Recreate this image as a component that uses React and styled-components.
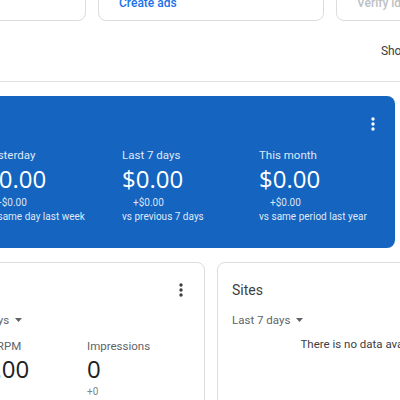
import React from 'react';
import styled, { createGlobalStyle } from 'styled-components';

const GlobalStyle = createGlobalStyle`
  body {
    margin: 0;
    background: #fff;
    font-family: Roboto, "Liberation Sans", Arial, sans-serif;
    overflow: hidden;
  }
`;

const Main = styled.div`
  margin: -59px 0 0 -166px;
  width: 679px;
  display: flex;
  flex-direction: column;
`;

const TopRow = styled.div`
  display: grid;
  grid-template-columns: 252px 226px 226px;
  gap: 12px;
`;

const TopCard = styled.div`
  box-sizing: border-box;
  height: 80px;
  border: 1px solid #dadce0;
  border-radius: 8px;
  padding: 15px 20px 9px;
  display: flex;
  flex-direction: column;
  justify-content: space-between;
`;

const TopTitle = styled.div`
  font-size: 13px;
  line-height: 20px;
  color: #3c4043;
`;

const TopLink = styled.div`
  font-size: 12px;
  line-height: 16px;
  font-weight: 500;
  color: ${(p) => (p.disabled ? '#bdc1c6' : '#1a73e8')};
`;

const Toolbar = styled.div`
  height: 61px;
  box-sizing: border-box;
  border-bottom: 1px solid #e0e0e0;
  display: flex;
  align-items: center;
  justify-content: flex-end;
  padding-right: 37px;
  font-size: 12px;
  color: #3c4043;
`;

const BlueCard = styled.div`
  box-sizing: border-box;
  margin-top: 14px;
  width: 561px;
  height: 152px;
  background: #1565c0;
  border-radius: 8px;
  padding: 8px 12px 0 14px;
  color: #fff;
`;

const CardHeader = styled.div`
  display: flex;
  align-items: center;
  justify-content: space-between;
  height: ${(p) => p.h || 40}px;
`;

const CardName = styled.span`
  font-size: 14px;
`;

const Kebab = styled.svg`
  width: 20px;
  height: 20px;
  fill: ${(p) => p.color || '#3c4043'};
  display: block;
`;

const StatGrid = styled.div`
  margin-top: ${(p) => p.mt || 0}px;
  display: grid;
  grid-template-columns: repeat(${(p) => p.cols}, ${(p) => p.w}px);
`;

const StatLabel = styled.div`
  font-size: 11.5px;
  line-height: 20px;
  color: ${(p) => (p.light ? 'rgba(255,255,255,0.88)' : '#5f6368')};
`;

const StatValue = styled.div`
  font-family: "Open Sans", Roboto, sans-serif;
  font-size: 24px;
  line-height: ${(p) => (p.light ? 28 : 26)}px;
  color: ${(p) => (p.light ? '#fff' : '#202124')};
`;

const StatDelta = styled.div`
  margin-top: ${(p) => p.mt || 0}px;
  font-size: 10px;
  line-height: ${(p) => (p.light ? 14 : 16)}px;
  padding-left: ${(p) => (p.indent ? 11 : 0)}px;
  color: ${(p) => (p.light ? 'rgba(255,255,255,0.85)' : '#80868b')};
`;

const Note = styled.div`
  font-size: 10px;
  line-height: 14px;
  color: rgba(255, 255, 255, 0.88);
`;

const LowerRow = styled.div`
  margin-top: 14px;
  display: grid;
  grid-template-columns: 371px 296px;
  gap: 12px;
`;

const Card = styled.div`
  box-sizing: border-box;
  height: 200px;
  border: 1px solid #dadce0;
  border-radius: 8px;
  padding: 15px 13px 0 14px;
`;

const CardTitle = styled.div`
  font-size: 14px;
  line-height: 24px;
  color: #3c4043;
`;

const Dropdown = styled.div`
  margin-top: 8px;
  display: flex;
  align-items: center;
  gap: 6px;
  font-size: 11.5px;
  line-height: 20px;
  color: #5f6368;
`;

const Caret = styled.svg`
  width: 7px;
  height: 4px;
  fill: #5f6368;
`;

const Empty = styled.div`
  margin-top: 4px;
  text-align: center;
  font-size: 11.5px;
  line-height: 20px;
  color: #3c4043;
`;

const MoreIcon = ({ color }) => (
  <Kebab viewBox="0 0 20 20" color={color}>
    <circle cx="10" cy="5" r="1.7" />
    <circle cx="10" cy="10" r="1.7" />
    <circle cx="10" cy="15" r="1.7" />
  </Kebab>
);

const DropDown = ({ children }) => (
  <Dropdown>
    {children}
    <Caret viewBox="0 0 7 4">
      <path d="M0 0h7L3.5 4z" />
    </Caret>
  </Dropdown>
);

const earnings = [
  { label: 'Today so far', value: '$0.00', delta: '+$0.00', note: 'vs same day last week' },
  { label: 'Yesterday', value: '$0.00', delta: '+$0.00', note: 'vs same day last week' },
  { label: 'Last 7 days', value: '$0.00', delta: '+$0.00', note: 'vs previous 7 days' },
  { label: 'This month', value: '$0.00', delta: '+$0.00', note: 'vs same period last year' },
];

const metrics = [
  { label: 'Page views', value: '0', delta: '+0' },
  { label: 'Page RPM', value: '$0.00', delta: '+$0.00' },
  { label: 'Impressions', value: '0', delta: '+0' },
];

const App = () => {
  return (
    <>
      <GlobalStyle />
      <Main>
        <TopRow>
          <TopCard>
            <TopTitle>Payments</TopTitle>
            <TopLink>View payments</TopLink>
          </TopCard>
          <TopCard>
            <TopTitle>Ads</TopTitle>
            <TopLink>Create ads</TopLink>
          </TopCard>
          <TopCard>
            <TopTitle>Identity</TopTitle>
            <TopLink disabled>Verify identity</TopLink>
          </TopCard>
        </TopRow>

        <Toolbar>Show fewer cards</Toolbar>

        <BlueCard>
          <CardHeader>
            <CardName>Estimated earnings</CardName>
            <MoreIcon color="#fff" />
          </CardHeader>
          <StatGrid cols={4} w={137} mt={1}>
            {earnings.map((e) => (
              <div key={e.label}>
                <StatLabel light>{e.label}</StatLabel>
                <StatValue light>{e.value}</StatValue>
                <StatDelta light indent mt={3}>{e.delta}</StatDelta>
                <Note>{e.note}</Note>
              </div>
            ))}
          </StatGrid>
        </BlueCard>

        <LowerRow>
          <Card>
            <CardHeader h={24}>
              <CardTitle>Performance</CardTitle>
              <MoreIcon />
            </CardHeader>
            <DropDown>Compared with previous 7 days</DropDown>
            <StatGrid cols={3} w={119} mt={6}>
              {metrics.map((m) => (
                <div key={m.label}>
                  <StatLabel>{m.label}</StatLabel>
                  <StatValue>{m.value}</StatValue>
                  <StatDelta mt={2}>{m.delta}</StatDelta>
                </div>
              ))}
            </StatGrid>
          </Card>
          <Card>
            <CardTitle>Sites</CardTitle>
            <DropDown>Last 7 days</DropDown>
            <Empty>There is no data available</Empty>
          </Card>
        </LowerRow>
      </Main>
    </>
  );
};

export default App;
